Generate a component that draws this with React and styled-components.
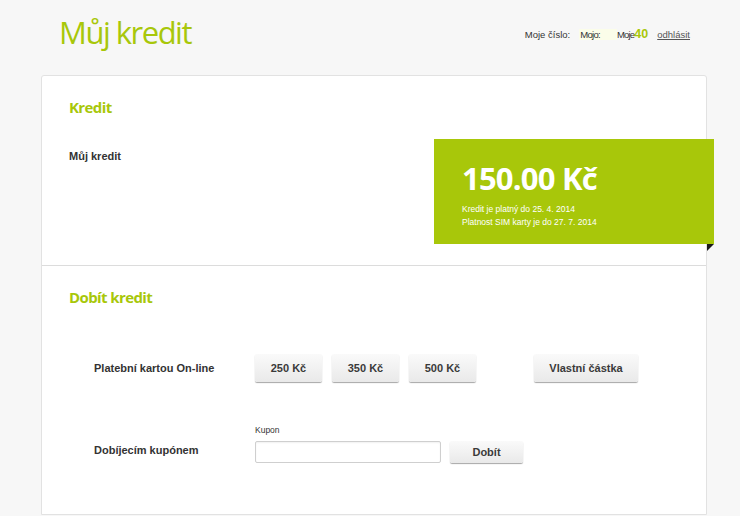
import React from 'react';
import styled, { createGlobalStyle } from 'styled-components';

const GREEN = '#a8c70a';

const Global = createGlobalStyle`
  body {
    margin: 0;
    background: #f7f7f7;
    font-family: "Liberation Sans", Arial, sans-serif;
    color: #333;
  }
`;

const Header = styled.header`
  height: 75px;
  display: flex;
  align-items: flex-start;
  justify-content: space-between;
  padding: 0 50px 0 59px;
  box-sizing: border-box;
`;

const Title = styled.h1`
  margin: 11px 0 0;
  font-family: "Open Sans", sans-serif;
  font-weight: 400;
  font-size: 31px;
  letter-spacing: -1.5px;
  color: ${GREEN};
`;

const UserBar = styled.div`
  display: flex;
  align-items: baseline;
  margin-top: 27px;
  font-size: 9.5px;
  color: #333;
`;

const UserLabel = styled.span`
  margin-right: 9px;
`;

const Alias = styled.span`
  padding: 0 17px 0 1px;
  background: #fbfde9;
  letter-spacing: -0.7px;
`;

const Nick = styled.span`
  letter-spacing: -0.8px;
`;

const Number = styled.span`
  font-size: 12.5px;
  font-weight: 700;
  color: ${GREEN};
`;

const Logout = styled.a`
  margin-left: 9px;
  color: #555;
  text-decoration: underline;
  cursor: pointer;
`;

const Card = styled.main`
  margin: 0 33px 0 41px;
  background: #fff;
  border: 1px solid #e2e2e2;
  border-radius: 3px 3px 0 0;
`;

const Section = styled.section`
  padding: ${p => p.$pad};
  & + & {
    border-top: 1px solid #dcdcdc;
  }
`;

const Heading = styled.h2`
  margin: 0;
  font-family: "Open Sans", sans-serif;
  font-weight: 700;
  font-size: 15px;
  line-height: 20px;
  letter-spacing: -0.6px;
  color: ${GREEN};
`;

const CreditRow = styled.div`
  display: flex;
  justify-content: space-between;
  align-items: flex-start;
  margin-top: 22px;
`;

const Label = styled.div`
  font-size: 11px;
  font-weight: 700;
  color: #333;
  margin-top: ${p => p.$top || 0}px;
`;

const CreditBox = styled.div`
  position: relative;
  width: 280px;
  height: 105px;
  margin-right: -8px;
  padding: 22px 28px 0;
  box-sizing: border-box;
  background: ${GREEN};
  color: #fff;

  &::after {
    content: '';
    position: absolute;
    right: 0;
    bottom: -7px;
    border-top: 7px solid #1a1a1a;
    border-right: 7px solid transparent;
  }
`;

const Amount = styled.div`
  font-family: "Open Sans", sans-serif;
  font-weight: 700;
  font-size: 31px;
  line-height: 34px;
  letter-spacing: -0.8px;
`;

const Validity = styled.div`
  margin-top: 8px;
  font-size: 8.5px;
  line-height: 13px;
`;

const Rows = styled.div`
  padding-left: 25px;
`;

const Row = styled.div`
  display: flex;
  align-items: ${p => p.$align || 'center'};
  margin-top: ${p => p.$top}px;
`;

const RowLabel = styled(Label)`
  width: 161px;
  flex-shrink: 0;
  margin-bottom: ${p => p.$bottom || 0}px;
`;

const Button = styled.button`
  height: ${p => p.$h || 28}px;
  width: ${p => p.$w}px;
  margin-left: ${p => p.$gap || 0}px;
  border: 0;
  border-radius: 2px;
  background: linear-gradient(#fafafa, #e9e9e9);
  box-shadow: 0 1px 1px rgba(0, 0, 0, 0.35);
  font-family: "Liberation Sans", Arial, sans-serif;
  font-size: 11px;
  font-weight: 700;
  color: #3a3a3a;
  cursor: pointer;
`;

const Field = styled.div`
  display: flex;
  flex-direction: column;
`;

const FieldLabel = styled.label`
  font-size: 8.5px;
  color: #333;
  margin-bottom: 6px;
`;

const Input = styled.input`
  width: 186px;
  height: 22px;
  box-sizing: border-box;
  border: 1px solid #cfcfcf;
  border-radius: 2px;
  box-shadow: inset 0 1px 2px rgba(0, 0, 0, 0.06);
`;

const amounts = ['250 Kč', '350 Kč', '500 Kč'];

const App = () => {
  return (
    <>
      <Global />
      <Header>
        <Title>Můj kredit</Title>
        <UserBar>
          <UserLabel>Moje číslo:</UserLabel>
          <Alias>Mojo:</Alias>
          <Nick>Moje</Nick>
          <Number>40</Number>
          <Logout>odhlásit</Logout>
        </UserBar>
      </Header>
      <Card>
        <Section $pad="21px 0 21px 27px">
          <Heading>Kredit</Heading>
          <CreditRow>
            <Label $top={11}>Můj kredit</Label>
            <CreditBox>
              <Amount>150.00 Kč</Amount>
              <Validity>
                Kredit je platný do 25. 4. 2014
                <br />
                Platnost SIM karty je do 27. 7. 2014
              </Validity>
            </CreditBox>
          </CreditRow>
        </Section>
        <Section $pad="21px 27px 51px">
          <Heading>Dobít kredit</Heading>
          <Rows>
            <Row $top={47}>
              <RowLabel>Platební kartou On-line</RowLabel>
              {amounts.map((a, i) => (
                <Button key={a} $w={67} $gap={i ? 10 : 0}>
                  {a}
                </Button>
              ))}
              <Button $w={104} $gap={58}>Vlastní částka</Button>
            </Row>
            <Row $top={43} $align="flex-end">
              <RowLabel $bottom={7}>Dobíjecím kupónem</RowLabel>
              <Field>
                <FieldLabel>Kupon</FieldLabel>
                <Input />
              </Field>
              <Button $w={73} $h={22} $gap={9}>Dobít</Button>
            </Row>
          </Rows>
        </Section>
      </Card>
    </>
  );
};

export default App;
